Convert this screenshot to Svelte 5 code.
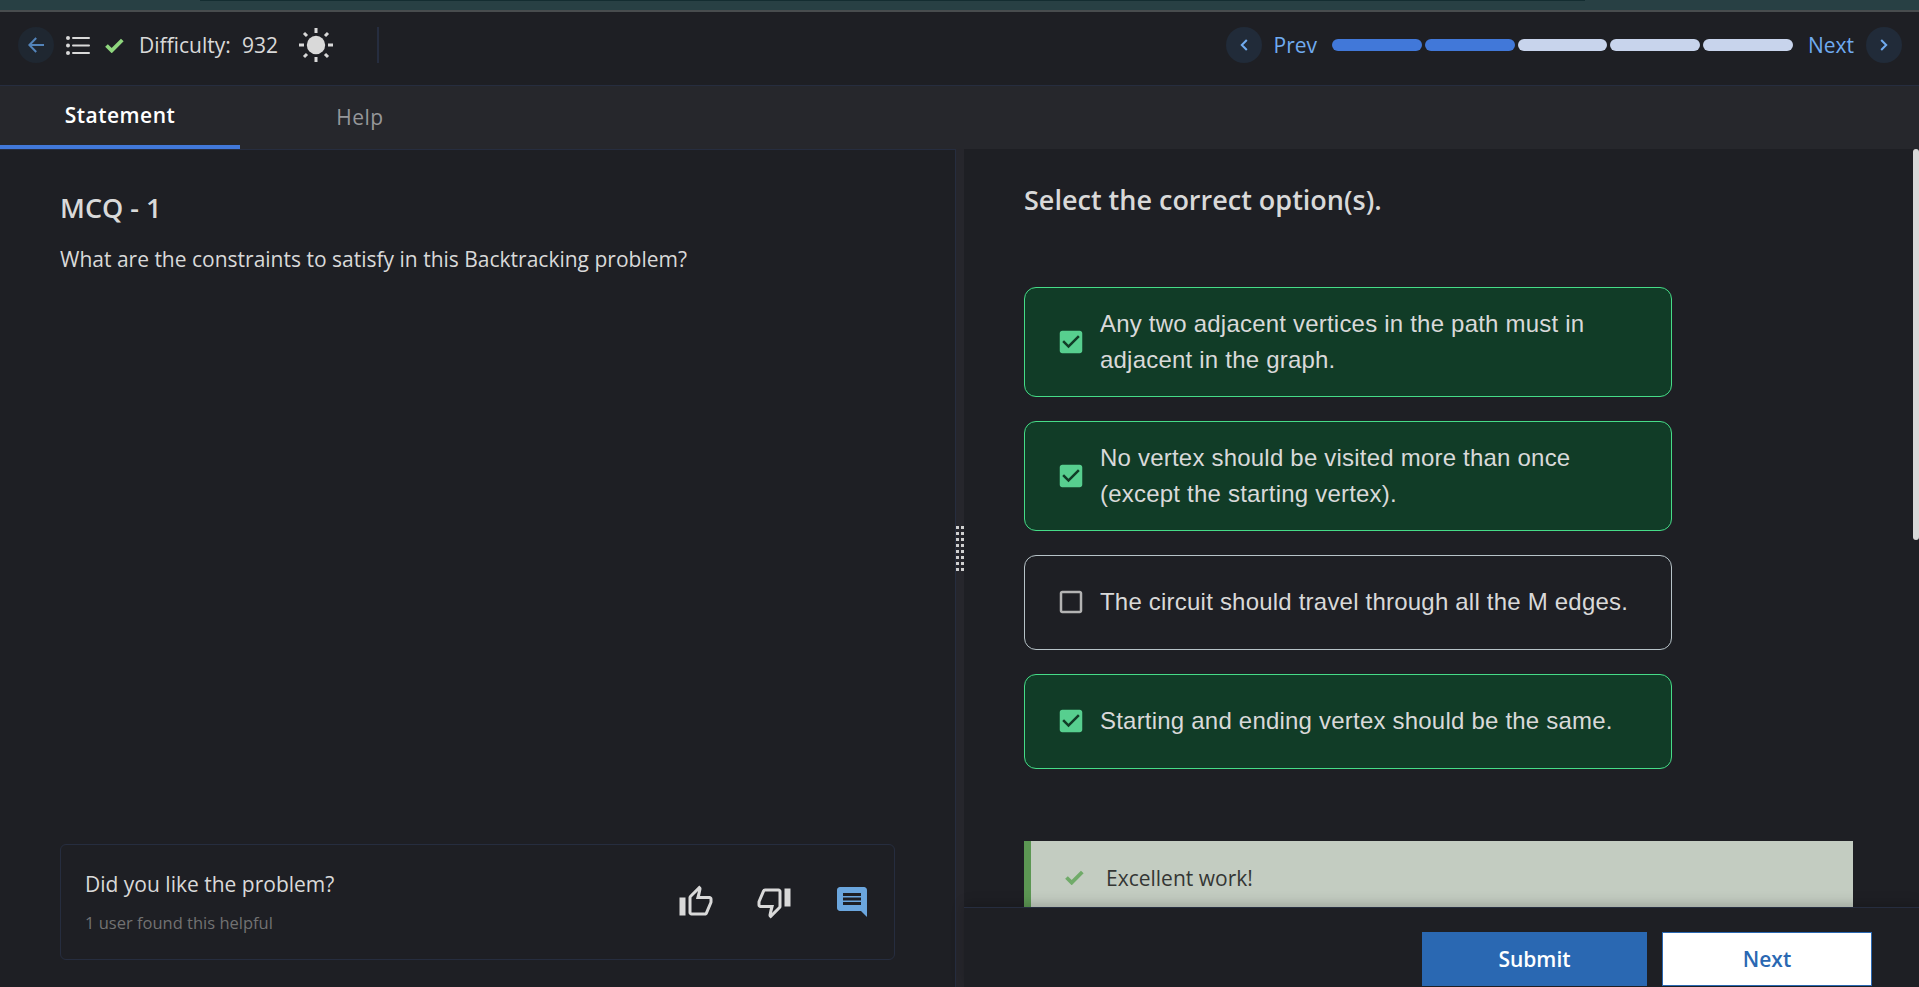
<script>
  const options = [
    { text: 'Any two adjacent vertices in the path must in adjacent in the graph.', checked: true },
    { text: 'No vertex should be visited more than once (except the starting vertex).', checked: true },
    { text: 'The circuit should travel through all the M edges.', checked: false },
    { text: 'Starting and ending vertex should be the same.', checked: true },
  ];
  const steps = [true, true, false, false, false];
</script>

<div class="page">
  <div class="chrome"><span class="chrome-shade"></span></div>
  <header class="topbar">
    <button class="round back" aria-label="Back">
      <svg width="16" height="16" viewBox="0 0 16 16" fill="none" stroke="#5384ba" stroke-width="2"><path d="M16 8H1.5M8.2 1 1.4 8l6.8 7" /></svg>
    </button>
    <svg class="list" width="24" height="19" viewBox="0 0 24 19" fill="#d9d9d9"><circle cx="2" cy="2" r="2" /><circle cx="2" cy="9.5" r="2" /><circle cx="2" cy="17" r="2" /><rect x="6" y="1" width="18" height="2" rx="1" /><rect x="6" y="8.5" width="18" height="2" rx="1" /><rect x="6" y="16" width="18" height="2" rx="1" /></svg>
    <svg class="tick" width="19" height="15" viewBox="0 0 19 15"><path d="M1.5 7.5 6.7 12.6 17.3 2" fill="none" stroke="#8fd67e" stroke-width="3.8" /></svg>
    <span class="diff">Difficulty:</span><span class="score">932</span>
    <svg class="sun" width="34" height="34" viewBox="0 0 34 34" fill="none" stroke="#d9d9d9" stroke-width="3"><circle cx="17" cy="17" r="9.2" fill="#d9d9d9" stroke="none" /><path d="M17 0v5M17 29v5M0 17h5M29 17h5M5 5l3 3M26 26l3 3M29 5l-3 3M8 26l-3 3" /></svg>
    <span class="divider"></span>
    <nav class="pager">
      <button class="round" aria-label="Previous"><svg width="8" height="12" viewBox="0 0 8 12" fill="none" stroke="#70abf0" stroke-width="2"><path d="M6.8 1 1.8 6l5 5" /></svg></button>
      <span class="prev">Prev</span>
      <div class="steps">{#each steps as done}<span class:done></span>{/each}</div>
      <span class="next">Next</span>
      <button class="round" aria-label="Next"><svg width="8" height="12" viewBox="0 0 8 12" fill="none" stroke="#70abf0" stroke-width="2"><path d="M1.2 1l5 5-5 5" /></svg></button>
    </nav>
  </header>

  <div class="tabs">
    <div class="tab active"><span>Statement</span></div>
    <div class="tab"><span>Help</span></div>
  </div>

  <main>
    <section class="left">
      <div>
        <h1>MCQ - 1</h1>
        <p>What are the constraints to satisfy in this Backtracking problem?</p>
      </div>
      <div class="feedback">
        <div class="question">
          <strong>Did you like the problem?</strong>
          <small>1 user found this helpful</small>
        </div>
        <svg class="up" width="36" height="36" viewBox="0 0 24 24" fill="#d9d9d9"><path d="M9 21h9c.83 0 1.54-.5 1.84-1.22l3.02-7.05c.09-.23.14-.47.14-.73v-2c0-1.1-.9-2-2-2h-6.31l.95-4.57.03-.32c0-.41-.17-.79-.44-1.06L14.17 1 7.58 7.59C7.22 7.95 7 8.45 7 9v10c0 1.1.9 2 2 2zM9 9l4.34-4.34L12 10h9v2l-3 7H9V9zM1 9h4v12H1z" /></svg>
        <svg class="down" width="36" height="36" viewBox="0 0 24 24" fill="#d9d9d9"><path d="M15 3H6c-.83 0-1.54.5-1.84 1.22l-3.02 7.05c-.09.23-.14.47-.14.73v2c0 1.1.9 2 2 2h6.31l-.95 4.57-.03.32c0 .41.17.79.44 1.06L9.83 23l6.59-6.59c.36-.36.58-.86.58-1.41V5c0-1.1-.9-2-2-2zm0 12-4.34 4.34L12 14H3v-2l3-7h9v10zm4-12h4v12h-4z" /></svg>
        <svg class="comment" width="36" height="36" viewBox="0 0 24 24" fill="#6ba6de"><path d="M21.99 4c0-1.1-.89-2-1.99-2H4c-1.1 0-2 .9-2 2v12c0 1.1.9 2 2 2h14l4 4-.01-18zM18 14H6v-2h12v2zm0-3H6V9h12v2zm0-3H6V6h12v2z" /></svg>
      </div>
    </section>
    <div class="splitter"><div class="grip">{#each Array(16) as _}<i></i>{/each}</div></div>
    <section class="right">
      <div class="scroll">
        <div class="content">
          <h2>Select the correct option(s).</h2>
          <div class="options">
            {#each options as o}
              <div class="option" class:correct={o.checked}>
                <svg width="30" height="30" viewBox="0 0 24 24">
                  {#if o.checked}
                    <path fill="#57cf8f" d="M19 3H5c-1.11 0-2 .9-2 2v14c0 1.1.89 2 2 2h14c1.11 0 2-.9 2-2V5c0-1.1-.89-2-2-2zm-9 14l-5-5 1.41-1.41L10 14.17l7.59-7.59L19 8l-9 9z" />
                  {:else}
                    <path fill="#b3b3b3" d="M19 5v14H5V5h14m0-2H5c-1.1 0-2 .9-2 2v14c0 1.1.9 2 2 2h14c1.1 0 2-.9 2-2V5c0-1.1-.9-2-2-2z" />
                  {/if}
                </svg>
                <span>{o.text}</span>
              </div>
            {/each}
          </div>
          <div class="alert">
            <svg width="19" height="15" viewBox="0 0 19 15"><path d="M1.5 7.5 6.7 12.6 17.3 2" fill="none" stroke="#70ab69" stroke-width="3.8" /></svg>
            <span>Excellent work!</span>
          </div>
        </div>
        <div class="thumb"></div>
      </div>
      <footer>
        <button class="submit">Submit</button>
        <button class="go">Next</button>
      </footer>
    </section>
  </main>
</div>

<style>
  :global(body) { margin: 0; background: #1e1f24; }
  .page { width: 1919px; height: 987px; display: flex; flex-direction: column; overflow: hidden; background: #1e1f24; color: #d9d9d9; font: 21px/32px "Open Sans", "Noto Sans", sans-serif; box-sizing: border-box; }
  .page :global(*) { box-sizing: border-box; }
  svg { display: block; flex: none; }
  button { font: inherit; border: 0; padding: 0; }
  .chrome { height: 12px; flex: none; background: #284044; border-bottom: 2px solid #484c4e; }
  .chrome-shade { display: block; width: 1385px; height: 1px; margin-left: 200px; background: #142d31; }
  .topbar { height: 74px; flex: none; display: flex; align-items: center; padding: 0 17px 7px 18px; border-bottom: 1px solid #262d3f; }
  .round { width: 36px; height: 36px; flex: none; border-radius: 50%; background: #212b39; display: flex; align-items: center; justify-content: center; }
  .back { background: #1f2731; }
  .list { margin-left: 12px; }
  .tick { margin-left: 15px; }
  .diff { width: 103px; margin-left: 15px; white-space: nowrap; }
  .score { width: 37px; }
  .sun { margin-left: 20px; }
  .divider { width: 2px; height: 36px; margin-left: 44px; background: #262d3f; }
  .pager { margin-left: auto; display: flex; align-items: center; color: #70abf0; }
  .prev { width: 58.5px; margin-left: 11.5px; }
  .next { width: 46px; margin: 0 12px 0 15px; }
  .steps { display: flex; gap: 3px; width: 461px; }
  .steps span { flex: 1; height: 12px; border-radius: 6px; background: #c8d4ec; }
  .steps .done { background: #4178d9; }
  .tabs { height: 63px; flex: none; display: flex; background: #26272c; }
  .tab { width: 240px; text-align: center; letter-spacing: .5px; color: #96979a; padding-top: 15px; }
  .tab.active { color: #fff; font-weight: 600; padding-top: 13px; border-bottom: 4px solid #4178d9; }
  main { flex: 1; min-height: 0; display: flex; }
  .left { width: 956px; flex: none; padding: 38px 60px 27px; display: flex; flex-direction: column; justify-content: space-between; border-top: 1px solid #262d3f; border-right: 1px solid #262d3f; }
  h1, h2 { margin: 0; font-size: 27px; line-height: 40px; font-weight: 600; }
  p { margin: 15px 0 0; }
  .feedback { height: 116px; border: 1px solid #262d3f; border-radius: 6px; display: flex; padding: 23px 24px 0 24px; }
  .question { flex: 1; display: flex; flex-direction: column; }
  strong { font-weight: 400; }
  small { font-size: 16.5px; line-height: 26px; margin-top: 10px; color: #727272; }
  .up, .down, .comment { margin-top: 16px; }
  .down, .comment { margin-left: 42px; }
  .splitter { width: 8px; flex: none; background: #26262c; display: flex; flex-direction: column; padding-top: 377px; }
  .grip { display: grid; grid-template-columns: 3px 3px; column-gap: 2px; row-gap: 3px; }
  .grip i { height: 3px; background: #d0d0d0; }
  .right { flex: 1; display: flex; flex-direction: column; min-width: 0; }
  .scroll { height: 758px; flex: none; display: flex; overflow: hidden; }
  .content { flex: 1; padding: 31px 60px 0; }
  .options { width: 648px; margin-top: 67px; display: flex; flex-direction: column; gap: 24px; }
  .option { min-height: 95px; padding: 17.6px 20px 18.4px 31px; display: flex; align-items: center; gap: 14px; border: 1px solid #b7c3c8; border-radius: 12px; font: 24px/36px "Liberation Sans", Arial, sans-serif; letter-spacing: .21px; }
  .option span { max-width: 540px; }
  .option.correct { background: #113c27; border-color: #46dc88; }
  .alert { height: 80px; width: 829px; margin-top: 72px; padding: 0 0 6px 34px; display: flex; align-items: center; gap: 22px; border-left: 7px solid #5c9753; background: #c3ccc1; color: #343634; }
  .thumb { width: 6px; height: 391px; border-radius: 3px; background: #d9d9d9; margin-left: -6px; }
  footer { flex: 1; display: flex; justify-content: flex-end; gap: 15px; padding: 24px 47px 0 0; border-top: 1px solid #262d3f; background: #1e1f24; box-shadow: 0 -3px 12px rgba(0, 0, 0, .2); z-index: 1; }
  footer button { height: 54px; font-weight: 600; }
  .submit { width: 225px; color: #fff; background: #2a68b2; }
  .go { width: 210px; color: #2a68b2; background: #fff; border: 1px solid #2a68b2; }
</style>
